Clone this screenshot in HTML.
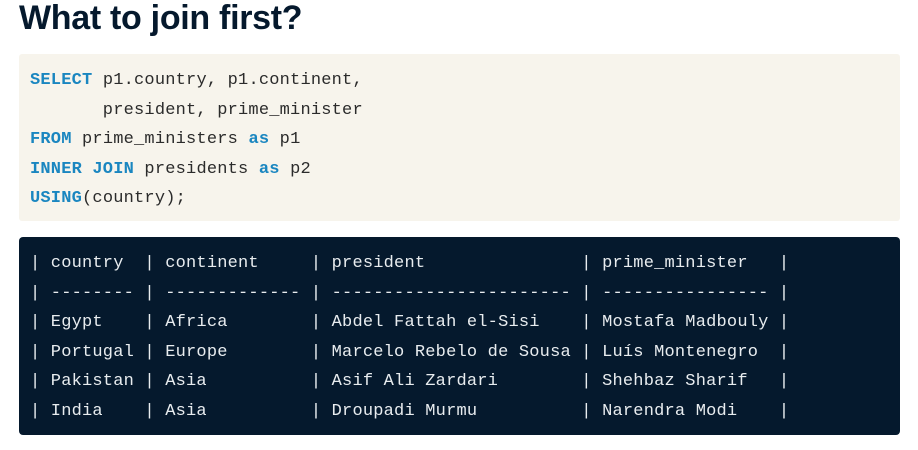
<!DOCTYPE html>
<html><head><style>
body{margin:0;width:918px;height:450px;background:#fff;position:relative;overflow:hidden}
h1{position:absolute;left:19px;top:-1px;margin:0;font:bold 34px "Liberation Sans",sans-serif;color:#05192d;letter-spacing:-0.3px}
pre{margin:0;font-family:"Liberation Mono",monospace;font-size:17px;letter-spacing:0.2px;line-height:29.6px}
.code{position:absolute;left:19px;top:54px;width:881px;height:167px;background:#f7f4ec;border-radius:3px}
.code pre{position:absolute;left:11px;top:12px;color:#2b2b2b}
b{color:#1a86c0}
.out{position:absolute;left:19px;top:237px;width:881px;height:198px;background:#05192d;border-radius:4px}
.out pre{position:absolute;left:11px;top:12px;color:#e8ecef}
</style></head><body>
<h1>What to join first?</h1>
<div class="code"><pre><b>SELECT</b> p1.country, p1.continent,
       president, prime_minister
<b>FROM</b> prime_ministers <b>as</b> p1
<b>INNER JOIN</b> presidents <b>as</b> p2
<b>USING</b>(country);</pre></div>
<div class="out"><pre>| country  | continent     | president               | prime_minister   |
| -------- | ------------- | ----------------------- | ---------------- |
| Egypt    | Africa        | Abdel Fattah el-Sisi    | Mostafa Madbouly |
| Portugal | Europe        | Marcelo Rebelo de Sousa | Luís Montenegro  |
| Pakistan | Asia          | Asif Ali Zardari        | Shehbaz Sharif   |
| India    | Asia          | Droupadi Murmu          | Narendra Modi    |</pre></div>
</body></html>
